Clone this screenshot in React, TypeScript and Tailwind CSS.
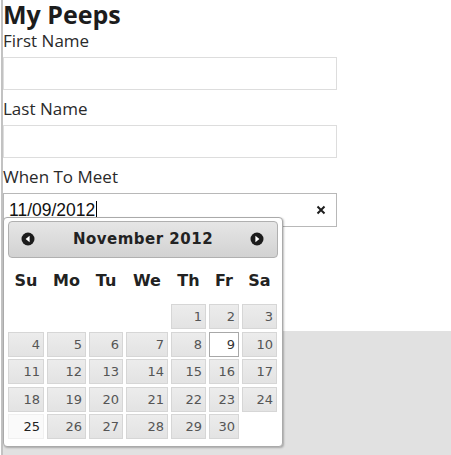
const cols = "grid grid-cols-[36px_39px_34px_42px_35px_30px_35px] gap-x-[3px]";

const days: (number | null)[] = [
  null, null, null, null, 1, 2, 3,
  4, 5, 6, 7, 8, 9, 10,
  11, 12, 13, 14, 15, 16, 17,
  18, 19, 20, 21, 22, 23, 24,
  25, 26, 27, 28, 29, 30, null,
];

function Arrow({ dir }: { dir: "l" | "r" }) {
  return (
    <svg width="14" height="14" viewBox="0 0 14 14">
      <circle cx="7" cy="7" r="6.5" fill="#1c1c1c" />
      {dir === "l" ? (
        <polygon points="8.6,3.8 8.6,10.2 4.6,7" fill="#fff" />
      ) : (
        <polygon points="5.4,3.8 5.4,10.2 9.4,7" fill="#fff" />
      )}
    </svg>
  );
}

function DayCell({ d }: { d: number | null }) {
  if (d === null) return <div className="h-[25px]" />;
  if (d === 9)
    return (
      <div className="h-[25px] border border-[#a8a8a8] bg-white text-right pr-[3px] text-[13px] leading-[23px] text-[#333]">
        {d}
      </div>
    );
  if (d === 25)
    return (
      <div className="h-[25px] border border-[#f0f0f0] bg-[#fafafa] text-right pr-[3px] text-[13px] leading-[23px] text-[#222]">
        {d}
      </div>
    );
  return (
    <div className="h-[25px] border border-[#d6d6d6] bg-linear-to-b from-[#ececec] to-[#e3e3e3] text-right pr-[3px] text-[13px] leading-[23px] text-[#555]">
      {d}
    </div>
  );
}

export default function App() {
  const weekdays = ["Su", "Mo", "Tu", "We", "Th", "Fr", "Sa"];
  return (
    <div className="min-h-[455px] bg-white pl-[1px]">
      <div className="border-l-2 border-[#c2c2c2] min-h-[455px] flex flex-col">
        <div className="font-['Open_Sans',sans-serif] text-[#2a2a2a]">
          <h1 className="text-[25px] font-bold leading-[28px] text-[#1c1c1c]">My Peeps</h1>
          <label className="block mt-[3px] text-[17px] leading-[20px]">First Name</label>
          <div className="mt-[6px] h-[33px] w-[334px] border border-[#dddddd] bg-white" />
          <label className="block mt-[9px] text-[17px] leading-[20px]">Last Name</label>
          <div className="mt-[6px] h-[33px] w-[334px] border border-[#dddddd] bg-white" />
          <label className="block mt-[9px] text-[17px] leading-[20px]">When To Meet</label>
          <div className="relative mt-[6px] w-[334px] z-10">
            <div className="h-[34px] border border-[#b8b8b8] bg-white flex items-center justify-between pl-[5px] pr-[10px] font-['Liberation_Sans',Arial,sans-serif] text-[17.5px] leading-[18px] text-[#111]">
              <div className="flex items-center">
                <span>11/09/2012</span>
                <span className="ml-[1px] w-[1px] h-[20px] bg-black mt-[2px]" />
              </div>
              <svg width="10" height="10" viewBox="0 0 10 10">
                <path d="M1.5 1.5 L8.5 8.5 M8.5 1.5 L1.5 8.5" stroke="#1e1e1e" strokeWidth="2" />
              </svg>
            </div>
            <div className="absolute left-0 top-[24px] w-[280px] h-[230px] border border-[#aaaaaa] rounded-[4px] bg-white shadow-[1px_1px_2px_rgba(0,0,0,0.25)] px-[4px] pt-[3px] font-['DejaVu_Sans',Verdana,sans-serif]">
              <div className="relative h-[37px] border border-[#b0b0b0] rounded-[4px] bg-linear-to-b from-[#e6e6e6] to-[#d2d2d2] flex items-center justify-center">
                <div className="absolute left-[12px] top-[10px]">
                  <Arrow dir="l" />
                </div>
                <span className="text-[15px] font-bold tracking-[0.5px] text-[#222]">November 2012</span>
                <div className="absolute right-[13px] top-[10px]">
                  <Arrow dir="r" />
                </div>
              </div>
              <div className={`${cols} mt-[3px] h-[40px] items-center`}>
                {weekdays.map((w) => (
                  <div key={w} className="text-center text-[16px] font-bold text-[#222]">
                    {w}
                  </div>
                ))}
              </div>
              <div className={`${cols} gap-y-[2.5px] mt-[3px]`}>
                {days.map((d, i) => (
                  <DayCell key={i} d={d} />
                ))}
              </div>
            </div>
          </div>
        </div>
        <div className="mt-[104px] flex-1 bg-[#e1e1e1]" />
      </div>
    </div>
  );
}
